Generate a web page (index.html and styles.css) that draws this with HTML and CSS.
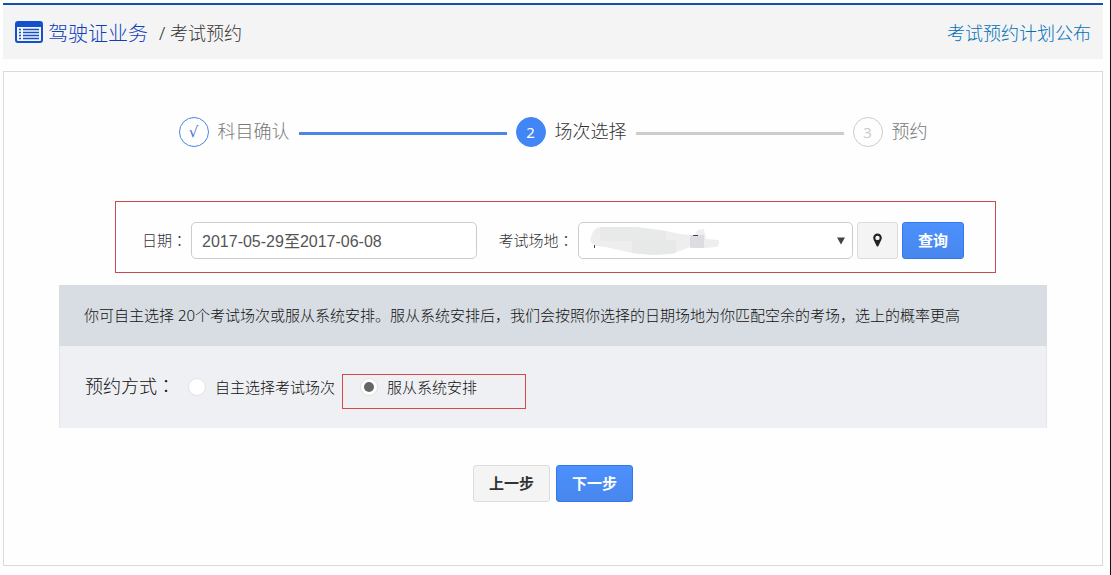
FILE: index.html
```html
<!DOCTYPE html>
<html lang="zh-CN">

<head>
  <meta charset="UTF-8">
  <title>考试预约</title>
  <link rel="stylesheet" href="styles.css">
</head>

<body>
  <header class="header">
    <svg class="header-icon" width="28" height="22" viewBox="0 0 28 22">
      <rect x="1" y="1" width="26" height="20" rx="2" fill="#f4f4f4" stroke="#1450cc" stroke-width="2" />
      <path d="M1 2h26v4H1z" fill="#1450cc" />
      <path d="M4 8.500h2M8 8.500h16M4 11.500h2M8 11.500h16M4 14.500h2M8 14.500h16M4 17.500h2M8 17.500h16" stroke="#1450cc" stroke-width="1.500" />
    </svg>
    <h1 class="header-title">驾驶证业务</h1>
    <span class="header-sub">/ 考试预约</span>
    <a class="header-link" href="#">考试预约计划公布</a>
  </header>

  <main class="panel">
    <!-- Steps -->
    <div class="steps">
      <span class="step-number done">√</span>
      <span class="step-name">科目确认</span>
      <span class="step-line done"></span>
      <span class="step-number current">2</span>
      <span class="step-name current">场次选择</span>
      <span class="step-line"></span>
      <span class="step-number">3</span>
      <span class="step-name">预约</span>
    </div>

    <!-- Search -->
    <form class="search">
      <label class="search-label" for="date">日期<span class="colon" lang="zh-TW">：</span></label>
      <input class="search-input" type="text" id="date" value="2017-05-29至2017-06-08">
      <label class="search-label place-label" for="place">考试场地<span class="colon" lang="zh-TW">：</span></label>
      <div class="select-box">
        <select class="search-select" id="place">
          <option></option>
        </select>
        <svg class="smudge" width="132" height="30" viewBox="0 0 132 30">
          <path d="M4 9Q6 3 12 2L48 2L78 6L92 9L106 10L110 5L116 4L118 14L130 15Q133 18 129 22L116 23L102 22L84 29L66 30L44 28L18 22Q4 22 2 15Z" fill="#eeeeef" />
          <path d="M12 2H48L78 6V16H12Z" fill="#e8e9e9" />
          <path d="M44 15H88V28L66 30L44 28Z" fill="#e7e8e8" />
          <path d="M102 10h14v13h-14z" fill="#dcdde0" />
          <path d="M105 10h5v1h-5zM6 20h1v3H6z" fill="#444" />
        </svg>
        <svg class="arrow" width="8" height="8" viewBox="0 0 8 8">
          <path d="M0 0.500h8L4 7.500z" fill="#444" />
        </svg>
      </div>
      <button class="button map-button" type="button" aria-label="地图">
        <svg width="9" height="14" viewBox="0 0 9 14">
          <path fill-rule="evenodd" d="M4.500 0.500A4.300 4.300 0 0 0 0.200 4.800C0.200 6.500 1.500 8.300 2.300 10.200L3.600 13Q4.500 14 5.400 13L6.700 10.200C7.500 8.300 8.800 6.500 8.800 4.800A4.300 4.300 0 0 0 4.500 0.500ZM4.500 2.700A2.200 2.200 0 1 1 4.500 7.100A2.200 2.200 0 1 1 4.500 2.700Z" fill="#222" />
        </svg>
      </button>
      <button class="button primary query-button" type="button">查询</button>
    </form>

    <!-- Booking mode -->
    <section class="booking">
      <p class="booking-tip">你可自主选择 20个考试场次或服从系统安排。服从系统安排后，我们会按照你选择的日期场地为你匹配空余的考场，选上的概率更高</p>
      <div class="booking-mode">
        <span class="mode-title">预约方式<span class="colon" lang="zh-TW">：</span></span>
        <label class="mode"><input class="radio" type="radio" name="mode">自主选择考试场次</label>
        <label class="mode marked"><input class="radio" type="radio" name="mode" checked>服从系统安排</label>
      </div>
    </section>

    <div class="actions">
      <button class="button" type="button">上一步</button>
      <button class="button primary" type="button">下一步</button>
    </div>
  </main>
</body>

</html>
```
FILE: styles.css
```css
* {
  box-sizing: border-box;
}

body {
  margin: 0;
  padding: 3px 7px 9px 3px;
  min-height: 100vh;
  border-right: 1px solid #111;
  background-color: #fefefe;
  font-family: "Noto Sans", "Noto Sans CJK SC", sans-serif;
  font-weight: 300;
  font-size: 15px;
  color: #111;
}

.colon {
  font-family: "Noto Sans CJK TC", sans-serif;
}

.header {
  display: flex;
  align-items: center;
  height: 56px;
  padding: 0 12px;
  border-top: 2px solid #1450a8;
  background-color: #f4f4f4;
}

.header-title {
  margin: 0 11px 0 5px;
  font-size: 20px;
  font-weight: 300;
  color: #0f40bc;
}

.header-sub {
  font-size: 18px;
  color: #333;
}

.header-link {
  margin-left: auto;
  font-size: 18px;
  color: #0070b8;
  text-decoration: none;
}

.panel {
  margin-top: 12px;
  padding: 44px 55px 63px;
  border: 1px solid #dadada;
}

.steps {
  display: flex;
  align-items: center;
  gap: 9px;
  max-width: 749px;
  height: 32px;
  margin: 0 auto;
}

.step-number {
  display: flex;
  align-items: center;
  justify-content: center;
  width: 30px;
  height: 30px;
  border: 1px solid #ccc;
  border-radius: 50%;
  font-size: 15px;
  font-weight: normal;
  color: #ccc;
}

.step-number.done {
  border-color: #4a86e8;
  font-family: "DejaVu Sans", sans-serif;
  color: #4a70d8;
}

.step-number.current {
  border-color: #4285f4;
  background-color: #4285f4;
  color: #fff;
}

.step-name {
  padding-bottom: 4px;
  font-size: 18px;
  color: #777;
}

.step-name.current {
  color: #333;
}

.step-line {
  flex: 1;
  height: 3px;
  margin-top: 2px;
  background-color: #ccc;
}

.step-line.done {
  background-color: #4a86e8;
}

.search {
  display: flex;
  align-items: center;
  gap: 4px;
  height: 72px;
  margin: 53px 51px 0 56px;
  padding: 6px 31px 0 26px;
  border: 1px solid #c94a4a;
}

.search-label {
  padding-bottom: 2px;
  color: #333;
}

.place-label {
  margin-left: 18px;
}

.search-input,
.search-select {
  width: 100%;
  height: 37px;
  padding: 0 10px;
  border: 1px solid #ccc;
  border-radius: 5px;
  background-color: #fff;
  font-family: "Liberation Sans", "Noto Sans CJK SC", sans-serif;
  font-size: 16px;
  color: #555;
}

.search-input {
  flex: 22;
  min-width: 0;
}

.search-select {
  display: block;
  appearance: none;
}

.select-box {
  position: relative;
  flex: 23;
}

.smudge {
  position: absolute;
  top: 3px;
  left: 10px;
  pointer-events: none;
}

.arrow {
  position: absolute;
  top: 15px;
  right: 8px;
  pointer-events: none;
}

.button {
  width: 77px;
  height: 37px;
  padding: 0 0 2px;
  border: 1px solid #dcdcdc;
  border-radius: 3px;
  background-color: #f4f4f4;
  font-family: inherit;
  font-size: 15px;
  font-weight: bold;
  color: #333;
  cursor: pointer;
}

.button.primary {
  border-color: #3079ed;
  background-image: linear-gradient(#4d90fe, #4787ed);
  color: #fff;
}

.map-button {
  display: flex;
  align-items: center;
  justify-content: center;
  width: 41px;
  padding: 0;
}

.query-button {
  width: 62px;
}

.booking {
  margin-top: 12px;
}

.booking-tip {
  margin: 0;
  padding: 18px 25px 19px;
  line-height: 24px;
  background-color: #d8dde3;
}

.booking-mode {
  display: flex;
  align-items: center;
  height: 82px;
  padding-left: 25px;
  border: 1px solid #e4e5e8;
  border-top: 0;
  border-bottom: 0;
  background-color: #eff0f4;
}

.mode-title {
  margin-right: 13px;
  padding-bottom: 4px;
  font-size: 18px;
}

.mode {
  display: flex;
  align-items: center;
  gap: 9px;
  line-height: 18px;
}

.mode.marked {
  height: 35px;
  margin: 8px 0 0 7px;
  padding: 0 48px 8px 17px;
  border: 1px solid #d84a4a;
}

.radio {
  appearance: none;
  width: 18px;
  height: 18px;
  margin: 0;
  padding: 3px;
  border: 1px solid #e2e2e4;
  border-radius: 50%;
  background-color: #fff;
}

.radio:checked::before {
  content: "";
  display: block;
  height: 10px;
  border-radius: 50%;
  background-color: #666;
}

.actions {
  display: flex;
  justify-content: center;
  gap: 6px;
  margin-top: 37px;
}
```
